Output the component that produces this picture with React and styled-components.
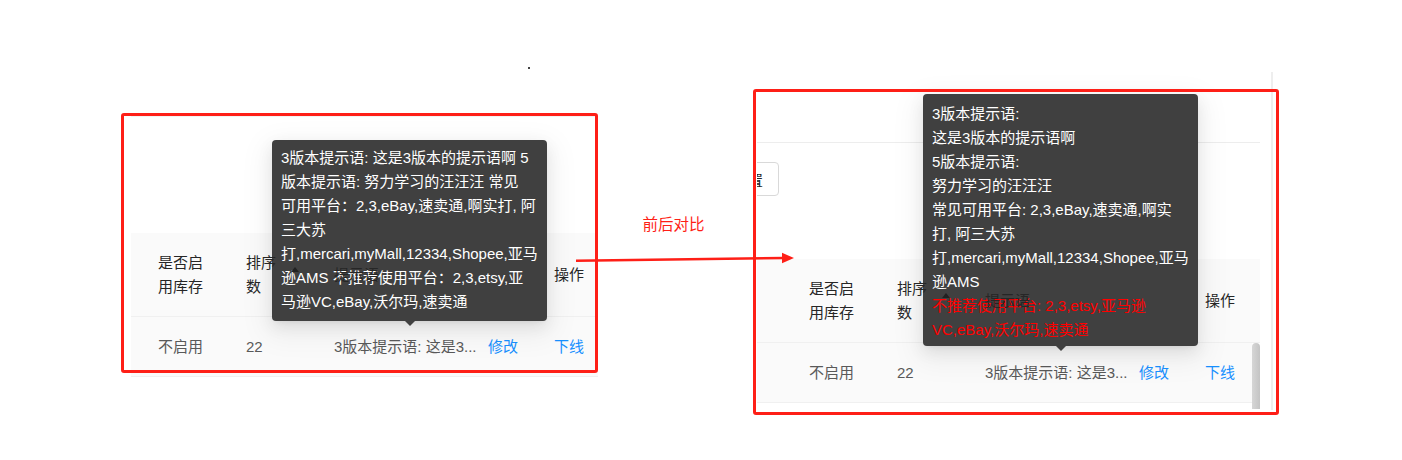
import React from 'react';
import styled, { createGlobalStyle } from 'styled-components';

const RED = '#fe1f17';
const FONT = '"Liberation Sans", "Noto Sans CJK SC", sans-serif';

const GlobalStyle = createGlobalStyle`
  html, body { margin: 0; padding: 0; background: #fff; }
  body {
    font-family: ${FONT};
    font-size: 15px;
    color: rgba(0, 0, 0, 0.85);
  }
`;

const Page = styled.div`
  position: relative;
  width: 1402px;
  height: 460px;
  display: flex;
  align-items: flex-start;
  padding-left: 121px;
  box-sizing: border-box;
  overflow: hidden;
  background: #fff;
`;

const StrayDot = styled.span`
  position: absolute;
  left: 528px;
  top: 67px;
  width: 2px;
  height: 2px;
  background: #444;
`;

const Frame = styled.div`
  position: relative;
  flex: none;
  width: ${(p) => p.$w}px;
  height: ${(p) => p.$h}px;
  margin-top: ${(p) => p.$top}px;
  box-sizing: border-box;
  background: #fff;
  overflow-x: clip;
  overflow-y: visible;
  &::after {
    content: '';
    position: absolute;
    inset: 0;
    border: 3px solid ${RED};
    border-radius: 3px;
    pointer-events: none;
    z-index: 5;
  }
`;

const Middle = styled.div`
  flex: none;
  width: 155px;
  display: flex;
  justify-content: center;
  padding-top: 213px;
`;

const Caption = styled.span`
  color: ${RED};
  font-size: 15.5px;
  line-height: 24px;
  margin-right: 4px;
`;

const ArrowSvg = styled.svg`
  position: absolute;
  left: 570px;
  top: 246px;
  z-index: 10;
  overflow: visible;
`;

/* ---------- screenshot internals ---------- */

const LeftTop = styled.div`
  height: 120px;
  padding: 3px 0 0 10px;
  box-sizing: border-box;
`;

const FaintRule = styled.div`
  height: 1px;
  background: #f3f3f3;
`;

const Table = styled.div`
  margin-left: ${(p) => p.$left || 0}px;
`;

const Row = styled.div`
  display: grid;
  grid-template-columns: 88px 88px 154px 66px 1fr;
  align-items: center;
  height: ${(p) => p.$h}px;
  padding-left: ${(p) => p.$pad}px;
  background: #fafafa;
  border-bottom: 1px solid #f0f0f0;
  line-height: 24px;
`;

const HeadCell = styled.div`
  position: relative;
  z-index: 3;
  display: flex;
  align-items: center;
  color: #262626;
`;

const HeadText = styled.span`
  max-width: ${(p) => p.$max || 200}px;
`;

const SortCaret = styled.span`
  width: 0;
  height: 0;
  margin-left: 13px;
  margin-top: -11px;
  border-left: 4px solid transparent;
  border-right: 4px solid transparent;
  border-bottom: 5px solid #222;
`;

const Cell = styled.div`
  color: #595959;
  white-space: nowrap;
`;

const LinkCell = styled.a`
  color: #1890ff;
  cursor: pointer;
  white-space: nowrap;
`;

const Tooltip = styled.div`
  position: absolute;
  left: ${(p) => p.$x}px;
  top: ${(p) => p.$y}px;
  width: 275px;
  box-sizing: border-box;
  padding: ${(p) => p.$pad};
  background: #404040;
  color: #fff;
  border-radius: 4px;
  font-size: 15px;
  line-height: 24px;
  z-index: 2;
  box-shadow: 0 3px 6px -4px rgba(0, 0, 0, 0.12), 0 6px 16px 0 rgba(0, 0, 0, 0.08),
    0 9px 28px 8px rgba(0, 0, 0, 0.05);
  &::after {
    content: '';
    position: absolute;
    left: 50%;
    bottom: -5px;
    margin-left: -5px;
    border-left: 5px solid transparent;
    border-right: 5px solid transparent;
    border-top: 5px solid #404040;
  }
`;

const TipLine = styled.div`
  white-space: nowrap;
  color: ${(p) => (p.$warn ? '#ff0000' : '#fff')};
`;

/* right screenshot */
const RightShot = styled.div`
  display: flex;
  align-items: flex-start;
  height: 100%;
`;

const RightMain = styled.div`
  width: 503px;
  margin-left: 4px;
  overflow-x: clip;
  overflow-y: visible;
`;

const TopRule = styled.div`
  margin-top: 53px;
  height: 1px;
  background: #ededed;
`;

const ToolRow = styled.div`
  margin-top: 19px;
  height: 34px;
  display: flex;
`;

const GhostButton = styled.button`
  margin-left: -40px;
  width: 62px;
  height: 34px;
  border: 1px solid #d9d9d9;
  border-radius: 4px;
  background: #fff;
  color: #262626;
  font-family: ${FONT};
  font-size: 15px;
  padding: 0;
`;

const HeadSpacer = styled.div`
  height: 63px;
`;

const BodyWrap = styled.div`
  display: flex;
  align-items: flex-start;
`;

const BodyMain = styled.div`
  flex: 1;
`;

const ScrollThumb = styled.div`
  width: 8px;
  height: 66px;
  border-radius: 4px 4px 0 0;
  background: linear-gradient(to right, #d6d6d6, #c4c4c4);
`;

const PageScrollEdge = styled.div`
  width: 2px;
  height: 338px;
  margin-left: 11px;
  margin-top: -17px;
  background: #eeeeee;
`;

const leftTip = [
  '3版本提示语: 这是3版本的提示语啊 5',
  '版本提示语: 努力学习的汪汪汪 常见',
  '可用平台：2,3,eBay,速卖通,啊实打, 阿',
  '三大苏',
  '打,mercari,myMall,12334,Shopee,亚马',
  '逊AMS 不推荐使用平台：2,3,etsy,亚',
  '马逊VC,eBay,沃尔玛,速卖通',
];

const rightTip = [
  { t: '3版本提示语:' },
  { t: '这是3版本的提示语啊' },
  { t: '5版本提示语:' },
  { t: '努力学习的汪汪汪' },
  { t: '常见可用平台: 2,3,eBay,速卖通,啊实' },
  { t: '打, 阿三大苏' },
  { t: '打,mercari,myMall,12334,Shopee,亚马' },
  { t: '逊AMS' },
  { t: '不推荐使用平台: 2,3,etsy,亚马逊', warn: true },
  { t: 'VC,eBay,沃尔玛,速卖通', warn: true },
];

function HeaderRow({ pad }) {
  return (
    <Row $h={83} $pad={pad}>
      <HeadCell>
        <HeadText $max={47}>是否启用库存</HeadText>
      </HeadCell>
      <HeadCell>
        <HeadText $max={32}>排序数</HeadText>
        <SortCaret />
      </HeadCell>
      <HeadCell>
        <HeadText>提示语</HeadText>
      </HeadCell>
      <HeadCell />
      <HeadCell>
        <HeadText>操作</HeadText>
      </HeadCell>
    </Row>
  );
}

function DataRow({ pad }) {
  return (
    <Row $h={59} $pad={pad}>
      <Cell>不启用</Cell>
      <Cell>22</Cell>
      <Cell>3版本提示语: 这是3...</Cell>
      <LinkCell>修改</LinkCell>
      <LinkCell>下线</LinkCell>
    </Row>
  );
}

export default function App() {
  return (
    <>
      <GlobalStyle />
      <Page>
        <StrayDot />

        <Frame $w={477} $h={260} $top={113}>
          <LeftTop>
            <FaintRule />
          </LeftTop>
          <Table $left={10}>
            <HeaderRow pad={27} />
            <DataRow pad={27} />
          </Table>
          <Tooltip $x={151} $y={27} $pad="6px 9px 7px">
            {leftTip.map((l) => (
              <TipLine key={l}>{l}</TipLine>
            ))}
          </Tooltip>
        </Frame>

        <Middle>
          <Caption>前后对比</Caption>
        </Middle>

        <Frame $w={526} $h={326} $top={89}>
          <RightShot>
            <RightMain>
              <TopRule />
              <ToolRow>
                <GhostButton>重置</GhostButton>
              </ToolRow>
              <HeadSpacer />
              <Table>
                <HeaderRow pad={52} />
                <BodyWrap>
                  <BodyMain>
                    <DataRow pad={52} />
                  </BodyMain>
                  <ScrollThumb />
                </BodyWrap>
              </Table>
            </RightMain>
            <PageScrollEdge />
          </RightShot>
          <Tooltip $x={170} $y={5} $pad="8px 9px 4px">
            {rightTip.map((l) => (
              <TipLine key={l.t} $warn={l.warn}>
                {l.t}
              </TipLine>
            ))}
          </Tooltip>
        </Frame>

        <ArrowSvg width="230" height="22" viewBox="0 0 230 22">
          <line x1="6" y1="14.8" x2="214" y2="12" stroke={RED} strokeWidth="2.5" />
          <polygon points="212,6.8 224,12 212,17.2" fill={RED} />
        </ArrowSvg>
      </Page>
    </>
  );
}
